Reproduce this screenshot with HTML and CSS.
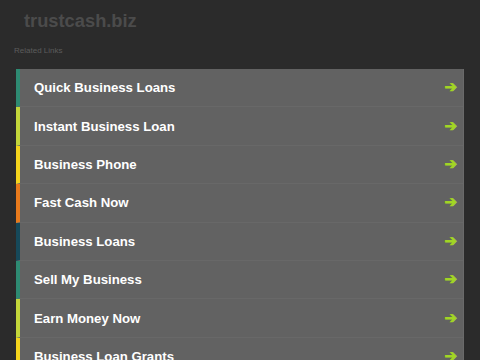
FILE: index.html
```html
<!DOCTYPE html>
<html>
<head>
<meta charset="utf-8">
<link rel="stylesheet" href="styles.css">
</head>
<body>
<div class="page">
  <h1 class="domain">trustcash.biz</h1>
  <div class="related">Related Links</div>
  <ul class="links">
    <li class="row c-teal"><span class="label">Quick Business Loans</span><span class="arrow">➔</span></li>
    <li class="row c-lime"><span class="label">Instant Business Loan</span><span class="arrow">➔</span></li>
    <li class="row c-yellow"><span class="label">Business Phone</span><span class="arrow">➔</span></li>
    <li class="row c-orange"><span class="label">Fast Cash Now</span><span class="arrow">➔</span></li>
    <li class="row c-navy"><span class="label">Business Loans</span><span class="arrow">➔</span></li>
    <li class="row c-teal"><span class="label">Sell My Business</span><span class="arrow">➔</span></li>
    <li class="row c-lime"><span class="label">Earn Money Now</span><span class="arrow">➔</span></li>
    <li class="row c-yellow"><span class="label">Business Loan Grants</span><span class="arrow">➔</span></li>
  </ul>
</div>
</body>
</html>
```
FILE: styles.css
```css
html, body {
  margin: 0;
  padding: 0;
  background: #2b2b2b;
  font-family: "Liberation Sans", Arial, sans-serif;
  overflow: hidden;
}
.page {
  padding: 0 16px 0 16px;
}
.domain {
  margin: 0;
  padding: 10px 0 0 8px;
  font-size: 18.3px;
  line-height: 21px;
  font-weight: bold;
  color: #4b4b4b;
}
.related {
  margin: 15px 0 0 -2px;
  font-size: 8px;
  line-height: 10px;
  color: #5c5c5c;
}
.links {
  list-style: none;
  margin: 13px 0 0 0;
  padding: 0;
  width: 448px;
  background: #626262;
  border-right: 1px solid #6a6a6a;
  box-sizing: border-box;
}
.row {
  display: flex;
  align-items: center;
  justify-content: space-between;
  height: 38.4px;
  box-sizing: border-box;
  border-left: 4px solid #2e8a72;
  border-bottom: 1px solid #686868;
  padding: 0 6px 0 14px;
}
.label {
  color: #ffffff;
  font-size: 13.2px;
  font-weight: bold;
}
.arrow {
  color: #a2d624;
  font-family: "DejaVu Sans", sans-serif;
  font-size: 15px;
  line-height: 1;
  font-weight: bold;
  -webkit-text-stroke: 0.8px #a2d624;
}
.c-teal { border-left-color: #2e8a72; }
.c-lime { border-left-color: #c3d63a; }
.c-yellow { border-left-color: #f4d41c; }
.c-orange { border-left-color: #e87a1c; }
.c-navy { border-left-color: #16495a; }
```
